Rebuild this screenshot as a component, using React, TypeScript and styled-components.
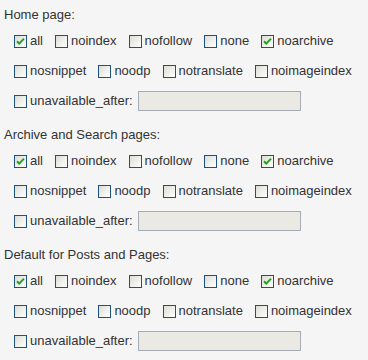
import styled, { createGlobalStyle } from "styled-components";

type Section = {
  title: string;
  checked: string[];
};

const sections: Section[] = [
  { title: "Home page:", checked: ["all", "noarchive"] },
  { title: "Archive and Search pages:", checked: ["all", "noarchive"] },
  { title: "Default for Posts and Pages:", checked: ["all", "noarchive"] },
];

const rows = [
  ["all", "noindex", "nofollow", "none", "noarchive"],
  ["nosnippet", "noodp", "notranslate", "noimageindex"],
];

export default function App() {
  return (
    <>
      <GlobalStyle />
      <Page>
        {sections.map((section) => (
          <SectionBox key={section.title}>
            <Heading>{section.title}</Heading>
            {rows.map((row, i) => (
              <Row key={i}>
                {row.map((name) => (
                  <Option key={name} name={name} checked={section.checked.includes(name)} />
                ))}
              </Row>
            ))}
            <Row>
              <Option name="unavailable_after:" checked={false} />
              <DateInput type="text" readOnly />
            </Row>
          </SectionBox>
        ))}
      </Page>
    </>
  );
}

function Option({ name, checked }: { name: string; checked: boolean }) {
  return (
    <Item>
      <Box>
        {checked && (
          <svg width="11" height="11" viewBox="0 0 11 11">
            <path d="M2 5.2 L4.2 7.6 L9 2.6" fill="none" stroke="#21a121" strokeWidth="2" />
          </svg>
        )}
      </Box>
      <span>{name}</span>
    </Item>
  );
}

const GlobalStyle = createGlobalStyle`
  body {
    margin: 0;
    background: #f5f5f5;
    font-family: "Liberation Sans", Arial, sans-serif;
    font-size: 13px;
    color: #333;
  }
`;

const Page = styled.div`
  width: 368px;
  min-height: 360px;
  background: #f5f5f5;
`;

const SectionBox = styled.section`
  padding: 7px 0 4px;
`;

const Heading = styled.div`
  line-height: 16px;
  padding-left: 4px;
  margin-bottom: 3px;
`;

const Row = styled.div`
  display: flex;
  align-items: center;
  gap: 12px;
  height: 30px;
  padding-left: 14px;
`;

const Item = styled.label`
  display: flex;
  align-items: center;
  gap: 3px;
  line-height: 16px;
  white-space: nowrap;
`;

const Box = styled.span`
  box-sizing: border-box;
  width: 13px;
  height: 13px;
  border: 1px solid #1c5180;
  background: linear-gradient(135deg, #dcdcd7 0%, #f0f0ec 55%, #ffffff 100%);
  display: flex;
  flex: none;
  align-items: center;
  justify-content: center;
`;

const DateInput = styled.input`
  box-sizing: border-box;
  width: 163px;
  height: 20px;
  margin-left: -7px;
  border: 1px solid #a5acb5;
  background: #ebe9e3;
  padding: 0 3px;
  font: inherit;
`;
